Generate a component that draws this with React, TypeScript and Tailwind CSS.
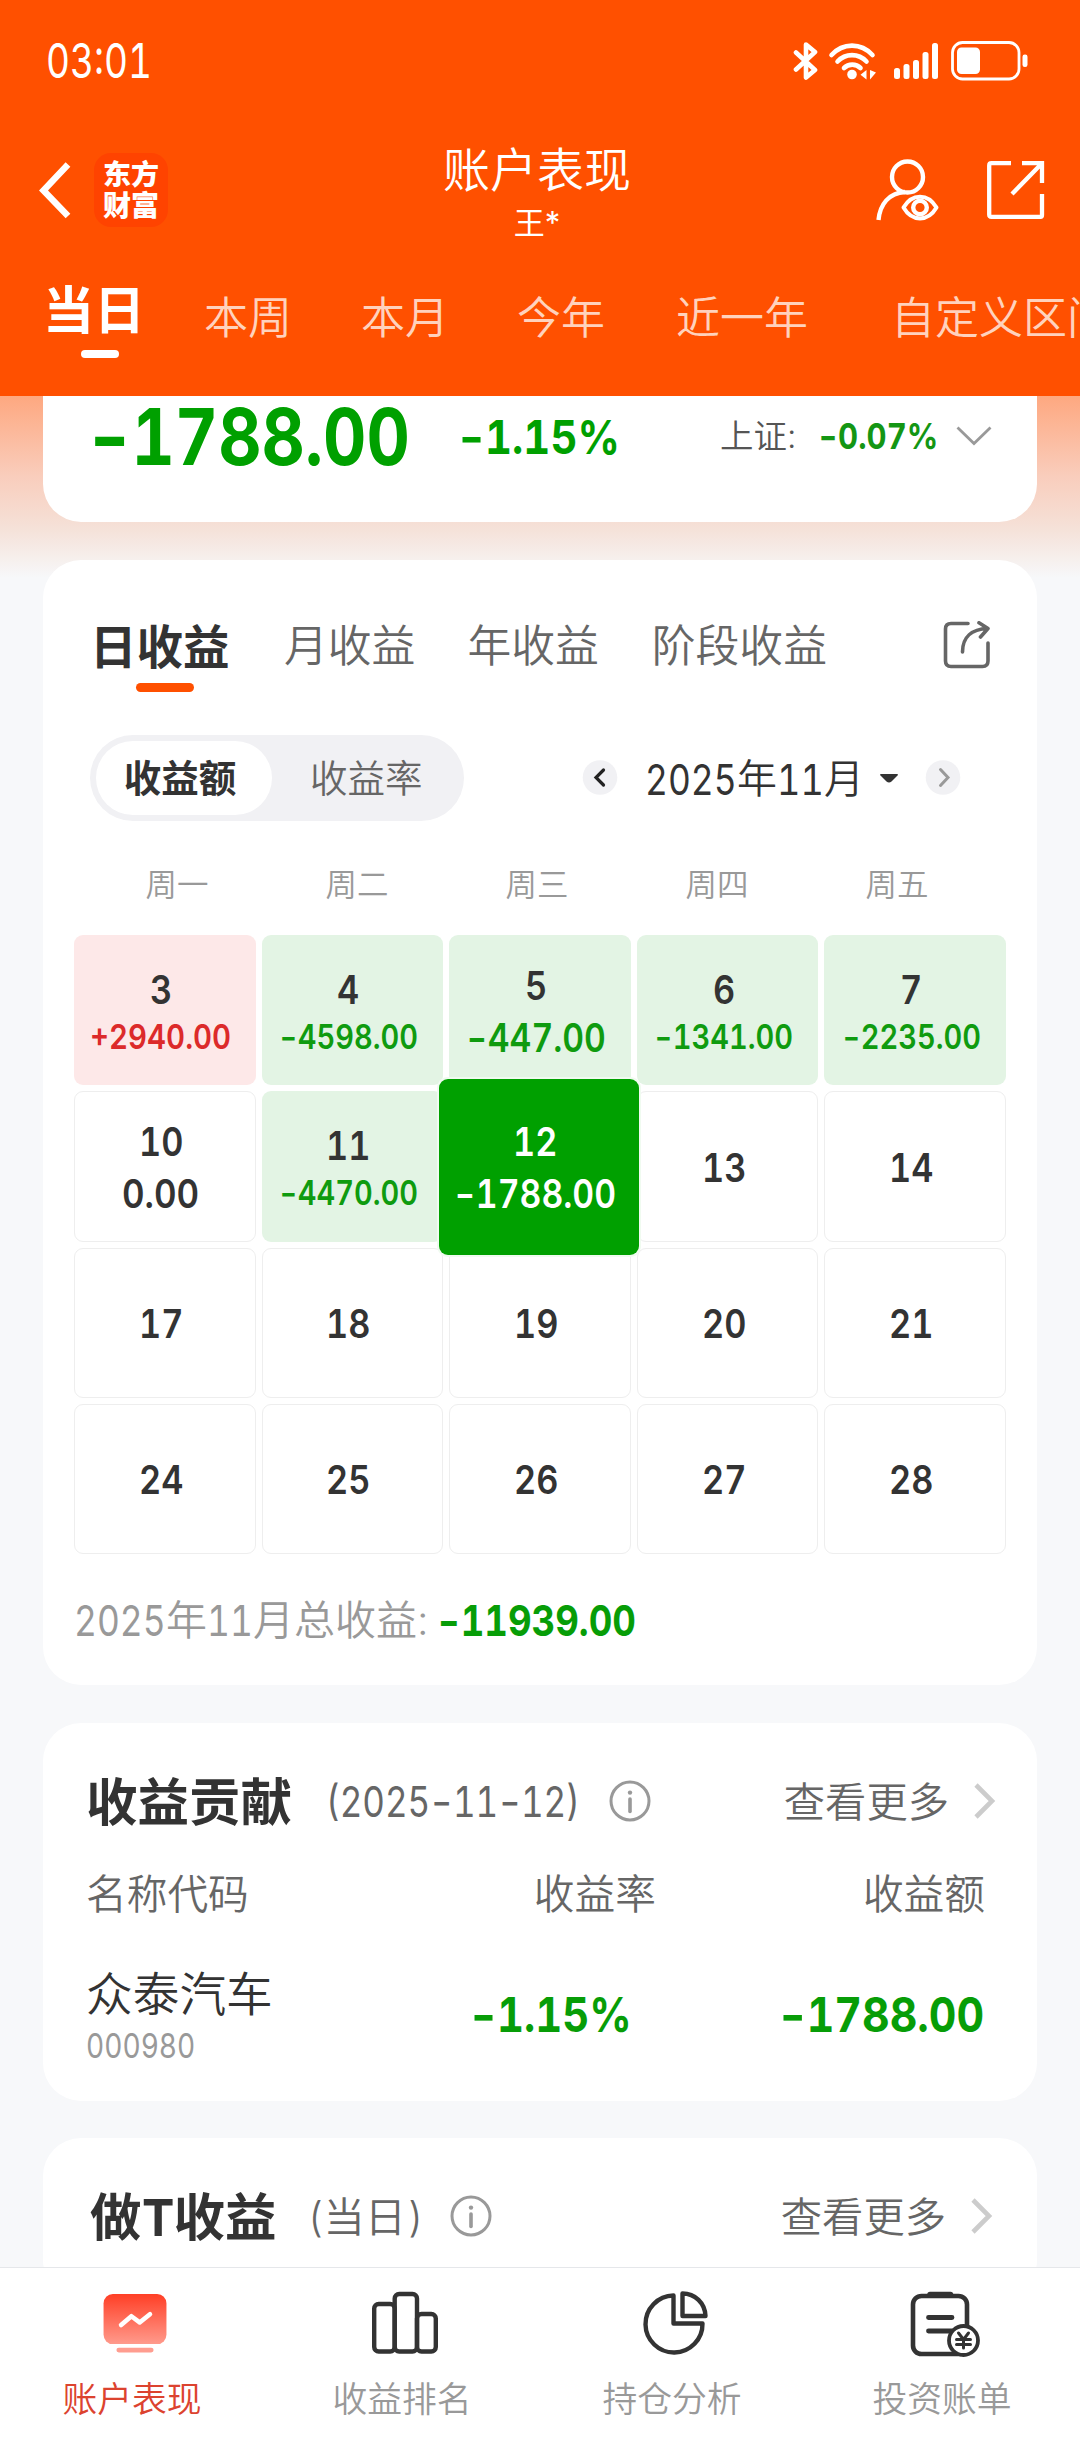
import { useLayoutEffect, useRef, useState } from 'react';

/** Numeric text condensed horizontally so that it fills the width of its box. */
function Num({ children, className = '' }: { children: string | number; className?: string }) {
  const box = useRef<HTMLSpanElement>(null);
  const text = useRef<HTMLSpanElement>(null);
  const [scale, setScale] = useState(1);
  useLayoutEffect(() => {
    if (box.current && text.current) {
      setScale(box.current.clientWidth / text.current.offsetWidth);
    }
  }, []);
  const parts = String(children).split(/(-)/).filter(Boolean);
  return (
    <span ref={box} className={`flex shrink-0 whitespace-nowrap tabular-nums ${className}`}>
      <span ref={text} className="shrink-0 origin-left" style={{ transform: `scaleX(${scale})` }}>
        {parts.map((p, i) =>
          p === '-' ? (
            <span key={i} className="inline-block scale-x-130">
              -
            </span>
          ) : (
            <span key={i}>{p}</span>
          ),
        )}
      </span>
    </span>
  );
}

function InfoIcon({ className = '' }: { className?: string }) {
  return (
    <svg viewBox="0 0 42 42" fill="none" className={`h-[42px] w-[42px] shrink-0 ${className}`}>
      <circle cx="21" cy="21" r="19" stroke="#999" strokeWidth="3" />
      <circle cx="21" cy="12.6" r="2.2" fill="#999" />
      <path d="M21 19v12.5" stroke="#999" strokeWidth="3.6" strokeLinecap="round" />
    </svg>
  );
}

function More({ className = '' }: { className?: string }) {
  return (
    <div className={`ml-auto flex items-center ${className}`}>
      <span className="pt-[3px] text-[41.3px] font-[350] text-[#666]">查看更多</span>
      <svg viewBox="0 0 24 38" fill="none" className="ml-[24px] h-[38px] w-[24px]">
        <path d="M3 3l16 16L3 35" stroke="#ccc" strokeWidth="4.6" />
      </svg>
    </div>
  );
}

function StatusBar() {
  return (
    <div className="flex h-[122px] shrink-0 items-center pl-[46px] text-white">
      <Num className="w-[106px] text-[48.500px]">03:01</Num>
      <svg viewBox="0 0 26 40" fill="none" className="ml-[641px] h-[40px] w-[26px]">
        <path d="M3 11.500l19 17.500-9 7.500V3.500l9 7.500L3 28.500" stroke="#fff" strokeWidth="4.600" strokeLinejoin="round" strokeLinecap="round" />
      </svg>
      <svg viewBox="0 0 48 40" fill="none" className="ml-[9px] h-[40px] w-[48px]">
        <g stroke="#fff" strokeWidth="4.600" strokeLinecap="round">
          <path d="M3.500 14c11.500-12.500 29.500-12.500 41 0" />
          <path d="M9.500 20.500c8-8.500 21-8.500 29 0" />
          <path d="M16 27c4.500-4.500 12-4.500 16.500 0" />
        </g>
        <circle cx="24" cy="33.500" r="4.800" fill="#fff" />
        <path d="M38.500 29v9.500l-6-4.700zM42 29v9.500l6-7z" fill="#fff" />
      </svg>
      <svg viewBox="0 0 45 36" fill="#fff" className="ml-[18px] h-[36px] w-[45px]">
        <rect x="0" y="25" width="6" height="11" rx="2.500" />
        <rect x="9.500" y="21" width="6" height="15" rx="2.500" />
        <rect x="19" y="17" width="6" height="19" rx="2.500" />
        <rect x="28.500" y="9" width="6" height="27" rx="2.500" />
        <rect x="38" y="0" width="6" height="36" rx="2.500" />
      </svg>
      <svg viewBox="0 0 77 40" fill="none" className="ml-[12px] h-[40px] w-[77px]">
        <rect x="1.500" y="1.500" width="66.500" height="36.500" rx="10" stroke="#fff" strokeWidth="2.800" />
        <rect x="6" y="6.500" width="23" height="26.500" rx="4.500" fill="#fff" />
        <rect x="71.500" y="13.500" width="5" height="12.500" rx="2.300" fill="#fff" />
      </svg>
    </div>
  );
}

function TitleBar() {
  return (
    <div className="flex h-[136px] shrink-0 items-center text-white">
      <div className="flex w-[300px] items-center pl-[38px]">
        <svg viewBox="0 0 34 58" fill="none" className="h-[58px] w-[34px]">
          <path d="M30 3.500L5.500 29.500 30 55" stroke="#fff" strokeWidth="6.500" />
        </svg>
        <div className="ml-[22px] flex h-[74px] w-[74px] flex-col items-center justify-center rounded-[17px] bg-[#ff4300] pt-[2px] text-[28px] leading-[31px] font-black">
          <span>东方</span>
          <span>财富</span>
        </div>
      </div>
      <div className="flex flex-1 flex-col items-center self-start pt-[17px]">
        <div className="flex h-[60px] items-center text-[47px] font-[350]">账户表现</div>
        <div className="flex h-[46px] items-center text-[31px]">王*</div>
      </div>
      <div className="flex w-[306px] items-center pl-[100px]">
        <svg viewBox="0 0 66 66" fill="none" stroke="#fff" strokeWidth="4.400" className="h-[66px] w-[66px]">
          <circle cx="33.500" cy="20" r="15.500" />
          <path d="M4.500 63C6 47 15 36 31 35" />
          <path d="M29.500 50.500C38 36 54 36 62.500 50.500 54 65 38 65 29.500 50.500z" strokeLinejoin="round" strokeWidth="4" />
          <circle cx="46" cy="50.500" r="6.800" />
        </svg>
        <svg viewBox="0 0 58 58" fill="none" stroke="#fff" strokeWidth="4.300" className="ml-[47px] h-[58px] w-[58px]">
          <path d="M24 2.200H4.500Q2.200 2.200 2.200 4.500V53.500Q2.200 55.800 4.500 55.800H53.500Q55 55.800 55 54V33M35 2.200H55V22M55 2.200L25 33" />
        </svg>
      </div>
    </div>
  );
}

const ranges = [
  { label: '本周', gap: 'ml-[58px]' },
  { label: '本月', gap: 'ml-[69px]' },
  { label: '今年', gap: 'ml-[68px]' },
  { label: '近一年', gap: 'ml-[71px]' },
  { label: '自定义区间', gap: 'ml-[83px]' },
];

function RangeTabs() {
  return (
    <div className="flex h-[138px] shrink-0 overflow-hidden whitespace-nowrap text-white">
      <div className="ml-[43px] flex w-[103px] shrink-0 flex-col">
        <span className="flex h-[92px] items-center pt-[12px] text-[51px] font-bold">当日</span>
        <span className="ml-[38px] h-[8px] w-[38px] rounded-full bg-white" />
      </div>
      {ranges.map((r) => (
        <span key={r.label} className={`flex h-[120px] shrink-0 items-center text-[44px] font-[350] text-[#ffd2bd] ${r.gap}`}>
          {r.label}
        </span>
      ))}
    </div>
  );
}

function SummaryCard() {
  return (
    <section className="flex h-[126px] shrink-0 rounded-b-[38px] bg-white pl-[45px]">
      <div className="flex h-[81px] items-center font-bold text-[#00a000]">
        <Num className="w-[322px] text-[79px]">-1788.00</Num>
        <Num className="ml-[48px] w-[162px] text-[47px]">-1.15%</Num>
      </div>
      <div className="ml-[100px] flex h-[80px] items-center">
        <span className="w-[79px] pt-[2px] text-[33.5px] font-[350] text-[#555]">上证:</span>
        <Num className="ml-[19px] w-[120px] text-[36px] font-bold text-[#149614]">-0.07%</Num>
        <svg viewBox="0 0 36 20" fill="none" className="ml-[18px] h-[20px] w-[36px]">
          <path d="M1.500 1.500L18 17.500 34.500 1.500" stroke="#999" strokeWidth="2.800" />
        </svg>
      </div>
    </section>
  );
}

const tones = {
  up: { cell: 'bg-[#fde8e8]', value: 'text-[#dc2a2a]' },
  down: { cell: 'bg-[#e3f4e4]', value: 'text-[#0f9b0f]' },
  flat: { cell: 'border border-[#eee]', value: 'text-[#333]' },
  selected: {
    cell: 'relative z-10 -mt-[12px] -mr-[8px] -mb-[13px] -ml-[10px] bg-[#00a000] text-white shadow-[0_0_0_2px_#f0fbf0]',
    value: 'text-white',
  },
};

type Day = { day: number; value?: string; tone?: keyof typeof tones; size?: 'sm' | 'lg'; width?: string };

const days: Day[] = [
  { day: 3, value: '+2940.00', tone: 'up', width: 'w-[141px]' },
  { day: 4, value: '-4598.00', tone: 'down', width: 'w-[139px]' },
  { day: 5, value: '-447.00', tone: 'down', size: 'lg', width: 'w-[140px]' },
  { day: 6, value: '-1341.00', tone: 'down', width: 'w-[139px]' },
  { day: 7, value: '-2235.00', tone: 'down', width: 'w-[139px]' },
  { day: 10, value: '0.00', tone: 'flat', size: 'lg', width: 'w-[77px]' },
  { day: 11, value: '-4470.00', tone: 'down', width: 'w-[139px]' },
  { day: 12, value: '-1788.00', tone: 'selected', size: 'lg', width: 'w-[162px]' },
  { day: 13 },
  { day: 14 },
  ...[17, 18, 19, 20, 21, 24, 25, 26, 27, 28].map((day) => ({ day })),
];

function DayCell({ day, value, tone = 'flat', size = 'sm', width = '' }: Day) {
  const small = size === 'sm';
  return (
    <div
      className={`flex flex-col items-center justify-center rounded-[9px] pr-[8px] font-semibold text-[#333] ${
        value && small ? 'pt-[6px]' : 'pt-[2px]'
      } ${tones[tone].cell}`}
    >
      <div className={`flex items-center ${small ? 'h-[48px]' : 'h-[52px]'} ${tone === 'selected' ? 'text-white' : ''}`}>
        <Num className={`text-[39px] ${day > 9 ? 'w-[44px]' : 'w-[22px]'}`}>{day}</Num>
      </div>
      {value && (
        <div className={`flex items-center ${small ? 'h-[48px] text-[34px]' : 'h-[52px] text-[39px]'} ${tones[tone].value}`}>
          <Num className={width}>{value}</Num>
        </div>
      )}
    </div>
  );
}

function CalendarCard() {
  return (
    <section className="mt-[38px] flex h-[1125px] shrink-0 flex-col rounded-[38px] bg-white">
      <div className="flex h-[150px] pt-[56px] text-[43.8px] text-[#666]">
        <div className="ml-[47px] flex w-[141px] flex-col">
          <span className="flex h-[60px] items-center pt-[2px] text-[46.500px] font-bold text-[#333]">日收益</span>
          <span className="mt-[7px] ml-[46px] h-[9px] w-[58px] rounded-full bg-[#ff5000]" />
        </div>
        <span className="ml-[53px] flex h-[60px] items-center pt-[1px] font-[350]">月收益</span>
        <span className="ml-[52px] flex h-[60px] items-center pt-[1px] font-[350]">年收益</span>
        <span className="ml-[53px] flex h-[60px] items-center pt-[1px] font-[350]">阶段收益</span>
        <svg viewBox="0 0 48 48" fill="none" stroke="#666" strokeWidth="3.600" className="mt-[5px] ml-[116px] h-[48px] w-[48px]">
          <path d="M25 2.500H8Q2.500 2.500 2.500 8V40Q2.500 45.500 8 45.500H39.500Q45 45.500 45 40V22" strokeLinecap="round" />
          <path d="M19.500 31C19.500 16 29 8 44.500 7.500M36 1.800L45 7.500 37.500 16" strokeLinecap="round" strokeLinejoin="round" />
        </svg>
      </div>

      <div className="mt-[25px] ml-[47px] flex h-[86px] items-center">
        <div className="flex h-[86px] w-[374px] items-center rounded-full bg-[#f1f1f4] p-[6px] text-[37.500px]">
          <span className="flex h-[74px] w-[176px] items-center justify-center rounded-full bg-white pt-[2px] pr-[8px] font-bold text-[#333]">收益额</span>
          <span className="ml-[38px] pt-[2px] font-[350] text-[#666]">收益率</span>
        </div>
        <svg viewBox="0 0 36 36" fill="none" className="ml-[118px] h-[36px] w-[36px]">
          <circle cx="18" cy="17.500" r="17.300" fill="#f1f1f4" />
          <path d="M21.500 10l-7.500 7.500 7.500 7.500" stroke="#222" strokeWidth="3.200" strokeLinecap="round" />
        </svg>
        <div className="ml-[27px] flex items-center pt-[2px] text-[#333]">
          <Num className="w-[92px] text-[43px]">2025</Num>
          <span className="text-[40px] font-[350]">年</span>
          <Num className="w-[47px] text-[43px]">11</Num>
          <span className="text-[40px] font-[350]">月</span>
        </div>
        <svg viewBox="0 0 18 9" className="ml-[16px] h-[9px] w-[18px]">
          <path d="M0 1Q0 0 1 0H17Q18 0 18 1L11.500 7.500Q9 9.500 6.500 7.500z" fill="#333" />
        </svg>
        <svg viewBox="0 0 36 36" fill="none" className="ml-[27px] h-[36px] w-[36px]">
          <circle cx="18" cy="17.500" r="17.300" fill="#f1f1f4" />
          <path d="M15.500 9.500l7.500 8-7.500 8" stroke="#999" strokeWidth="3" strokeLinecap="round" />
        </svg>
      </div>

      <div className="ml-[44px] grid h-[114px] w-[900px] grid-cols-5 pt-[46px] text-center text-[31.500px] leading-[36px] font-[350] text-[#999]">
        {['周一', '周二', '周三', '周四', '周五'].map((d) => (
          <span key={d}>{d}</span>
        ))}
      </div>

      <div className="mx-[31px] grid h-[619px] shrink-0 grid-cols-5 grid-rows-4 gap-[6px]">
        {days.map((d) => (
          <DayCell key={d.day} {...d} />
        ))}
      </div>

      <div className="ml-[31px] flex h-[131px] items-center pt-[1px] text-[41px] font-[350] text-[#999]">
        <Num className="w-[92px] text-[43px] font-normal">2025</Num>
        <span>年</span>
        <Num className="w-[46px] text-[43px] font-normal">11</Num>
        <span>月总收益:</span>
        <Num className="mr-[401px] ml-auto w-[199px] text-[43px] font-bold text-[#079d07]">-11939.00</Num>
      </div>
    </section>
  );
}

function ContributionCard() {
  return (
    <section className="mt-[38px] flex h-[378px] shrink-0 flex-col rounded-[38px] bg-white px-[43px]">
      <div className="flex h-[156px] items-center">
        <span className="pt-[4px] text-[51.500px] font-bold text-[#333]">收益贡献</span>
        <Num className="mt-[2px] ml-[34px] w-[254px] text-[42.500px] text-[#666]">(2025-11-12)</Num>
        <InfoIcon className="ml-[29px]" />
        <More className="-mr-[3px]" />
      </div>
      <div className="flex h-[32px] items-center pt-[1px] text-[40.700px] font-[350] text-[#666]">
        <span>名称代码</span>
        <span className="ml-[285px]">收益率</span>
        <span className="mr-[9px] ml-auto">收益额</span>
      </div>
      <div className="mt-[52px] flex">
        <div className="flex w-[384px] flex-col">
          <span className="flex h-[62px] items-center text-[46.700px] font-[350] text-[#333]">众泰汽车</span>
          <span className="flex h-[44px] items-center text-[33.500px] text-[#999]">
            <Num className="w-[109px]">000980</Num>
          </span>
        </div>
        <div className="flex h-[104px] flex-1 items-center font-bold text-[#079d07]">
          <Num className="w-[162px] text-[48px]">-1.15%</Num>
          <Num className="mr-[10px] ml-auto w-[205px] text-[48px]">-1788.00</Num>
        </div>
      </div>
    </section>
  );
}

function DayTradeCard() {
  return (
    <section className="mt-[37px] flex h-[160px] shrink-0 rounded-[38px] bg-white px-[47px]">
      <div className="flex h-[156px] flex-1 items-center">
        <span className="flex pt-[4px] text-[51.500px] font-bold text-[#333]">
          做<Num className="w-[32px]">T</Num>收益
        </span>
        <span className="ml-[32px] flex pt-[3px] text-[41.300px] font-[350] text-[#666]">
          <span className="w-[15px]">(</span>
          当日
          <span className="ml-[2px]">)</span>
        </span>
        <InfoIcon className="ml-[27px]" />
        <More className="-mr-[4px]" />
      </div>
    </section>
  );
}

function PerformanceIcon() {
  return (
    <svg viewBox="0 0 64 64" fill="none" className="h-[66px] w-[66px]">
      <defs>
        <linearGradient id="screen" x1="0" y1="0" x2="0" y2="1">
          <stop offset="0" stopColor="#ff3f26" />
          <stop offset="1" stopColor="#ff9a8c" />
        </linearGradient>
      </defs>
      <rect x="1.500" y="3" width="61" height="48.500" rx="9" fill="url(#screen)" />
      <path d="M18.500 33l10-8.500 8 6 10-8" stroke="#fff" strokeWidth="4.500" strokeLinecap="round" strokeLinejoin="round" />
      <rect x="14" y="55" width="36" height="4.600" rx="2.300" fill="#ff9d90" />
    </svg>
  );
}

function RankingIcon() {
  return (
    <svg viewBox="0 0 66 66" fill="none" stroke="#333" strokeWidth="4.400" className="h-[66px] w-[66px]">
      <rect x="2.200" y="13" width="20.500" height="47.500" rx="4.500" />
      <rect x="22.700" y="3" width="22.300" height="57.500" rx="4.500" />
      <rect x="45" y="23" width="18.800" height="37.500" rx="4.500" />
    </svg>
  );
}

function HoldingsIcon() {
  return (
    <svg viewBox="0 0 66 66" fill="none" stroke="#333" strokeWidth="4.400" strokeLinejoin="round" className="h-[66px] w-[66px]">
      <path d="M31.500 4.500A28.500 28.500 0 1 0 60.500 32.500H31.500z" />
      <path d="M40.500 2.500V25H63.500C63 12 53 2.500 40.500 2.500z" />
    </svg>
  );
}

function BillIcon() {
  return (
    <svg viewBox="0 0 70 68" fill="none" stroke="#333" strokeWidth="4.600" strokeLinecap="round" strokeLinejoin="round" className="h-[68px] w-[70px]">
      <rect x="3" y="5" width="54" height="58" rx="8.500" />
      <path d="M20 3.500H40.500" strokeWidth="5.500" />
      <path d="M18.500 26.500H42M18.500 40H42" strokeWidth="4.800" />
      <circle cx="53.500" cy="49.500" r="14.500" fill="#fff" strokeWidth="3.800" />
      <path d="M48.500 42l5 6.500 5-6.500M53.500 48.500v8.500M46.500 48.500h14M46.500 53.500h14" strokeWidth="3" />
    </svg>
  );
}

const navItems = [
  { label: '账户表现', icon: <PerformanceIcon />, tone: 'text-[#dc432f]' },
  { label: '收益排名', icon: <RankingIcon />, tone: 'text-[#999]' },
  { label: '持仓分析', icon: <HoldingsIcon />, tone: 'text-[#999]' },
  { label: '投资账单', icon: <BillIcon />, tone: 'text-[#999]' },
];

function BottomNav() {
  return (
    <nav className="grid h-[173px] shrink-0 grid-cols-4 border-t border-[#e5e7ea] bg-white">
      {navItems.map((n) => (
        <div key={n.label} className="flex flex-col items-center">
          <div className="mt-[23px] flex h-[68px] items-start">{n.icon}</div>
          <span className={`mt-[20px] flex h-[40px] items-center pr-[6px] text-[34.800px] font-[350] ${n.tone}`}>{n.label}</span>
        </div>
      ))}
    </nav>
  );
}

export default function App() {
  return (
    <div className="flex h-[2440px] w-[1080px] flex-col overflow-hidden bg-[#f7f8fa] font-['Inter','Noto_Sans_CJK_SC',sans-serif] leading-none">
      <header className="flex h-[396px] shrink-0 flex-col bg-[#ff5000]">
        <StatusBar />
        <TitleBar />
        <RangeTabs />
      </header>
      <main className="flex flex-1 flex-col overflow-hidden bg-[linear-gradient(180deg,#fea880_0px,#f9cdbc_80px,#f5e1d8_132px,#f6efec_162px,#f7f8fa_182px)] px-[43px]">
        <SummaryCard />
        <CalendarCard />
        <ContributionCard />
        <DayTradeCard />
      </main>
      <BottomNav />
    </div>
  );
}
